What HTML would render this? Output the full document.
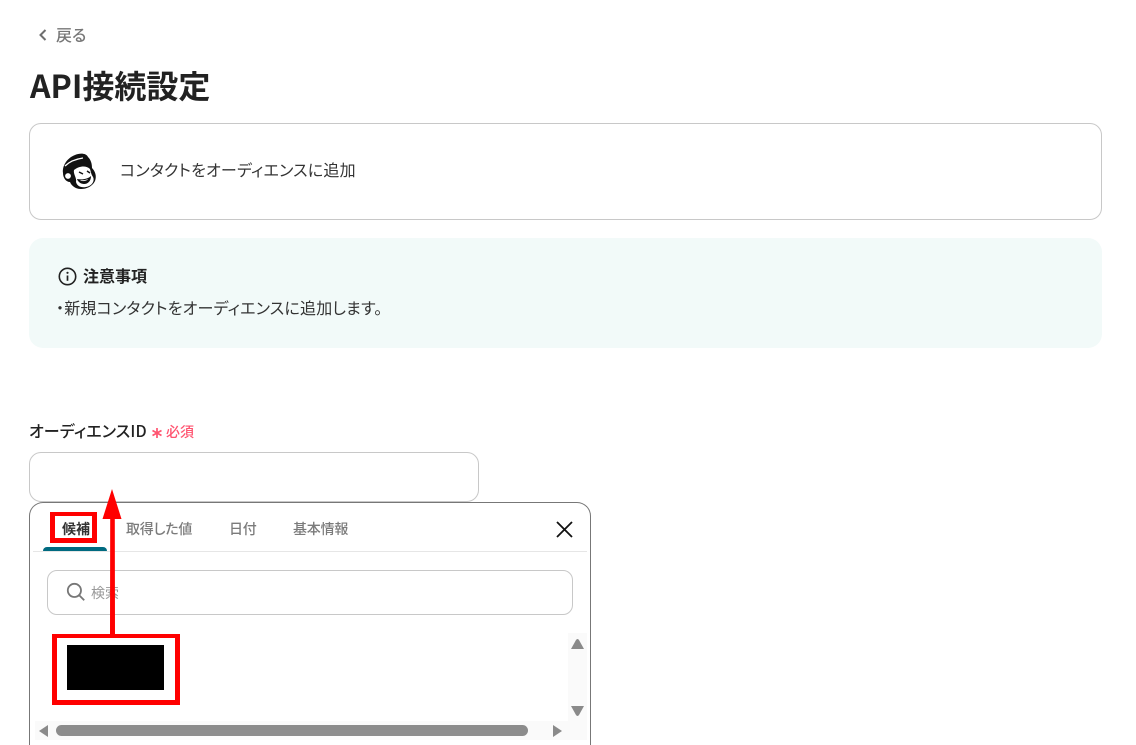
<!DOCTYPE html>
<html lang="ja">
<head>
<meta charset="utf-8">
<title>API接続設定</title>
<style>
html,body{margin:0;padding:0;background:#fff;width:1136px;height:745px;overflow:hidden}
body{position:relative;font-family:"Noto Sans CJK JP","Liberation Sans",sans-serif;color:#222;font-feature-settings:"palt"}
.a{position:absolute;white-space:nowrap;box-sizing:border-box}
</style>
</head>
<body>
<svg class="a" style="left:35px;top:27px" width="16" height="16" viewBox="0 0 16 16"><path d="M10.500 3 5.500 8l5 5" fill="none" stroke="#6f6f6f" stroke-width="2"/></svg>
<div class="a" style="left:56px;top:24px;font-size:16px;line-height:20px;font-weight:500;color:#777">戻る</div>
<div class="a" style="left:30px;top:65px;font-size:32px;line-height:40px;font-weight:700;color:#222">API接続設定</div>

<div class="a" style="left:29px;top:123px;width:1073px;height:97px;border:1px solid #c8c8c8;border-radius:12px"></div>
<svg class="a" style="left:61px;top:153px" width="37" height="37" viewBox="0 0 37 37">
<path d="M2 20C1 13 6 5 14 2c5-2 11-2 13 2 3 3 4 7 4 11 3 3 5 8 3 13-3 6-9 8-14 8-6 0-10-4-11-7-4 0-7-4-7-9Z" fill="#111"/>
<path d="M13 17c5-4 12-5 16-1 1 3 1 5 3 8 2 4-1 9-7 10-5 1-9-1-10-5 1-4-3-8-2-12Z" fill="#fff"/>
<path d="M18 19l4 2M26 18l3 2" stroke="#111" stroke-width="1.500" fill="none"/>
<path d="M16 26c5 1 11 0 14-3 0 5-3 8-7 8-3 0-6-2-7-5Z" fill="#111"/>
<path d="M19 27c3 .5 6 0 8-1-1 2-6 3-8 1Z" fill="#fff"/>
<circle cx="7" cy="23" r="3.400" fill="#fff" stroke="#111"/>
<path d="M4 13C9 8 15 6 22 5" stroke="#fff" stroke-width="1.300" fill="none"/>
</svg>
<div class="a" style="left:120px;top:158px;font-size:16px;line-height:22px;letter-spacing:.2px;color:#333">コンタクトをオーディエンスに追加</div>

<div class="a" style="left:29px;top:238px;width:1073px;height:110px;background:#f2faf9;border-radius:14px"></div>
<svg class="a" style="left:58px;top:267px" width="19" height="19" viewBox="0 0 19 19"><circle cx="9.500" cy="9.500" r="8.200" fill="none" stroke="#222" stroke-width="1.600"/><circle cx="9.500" cy="5.800" r="1.100" fill="#222"/><path d="M9.500 8.500v5.300" stroke="#222" stroke-width="1.700"/></svg>
<div class="a" style="left:83px;top:265px;font-size:16px;line-height:21px;font-weight:700;color:#222">注意事項</div>
<div class="a" style="left:56px;top:297px;font-size:16px;line-height:21px;letter-spacing:.2px;color:#333">・新規コンタクトをオーディエンスに追加します。</div>

<div class="a" style="left:29px;top:420px;font-size:16px;line-height:21px;letter-spacing:.15px;font-weight:500;color:#222">オーディエンスID</div>
<svg class="a" style="left:151px;top:427px" width="12" height="12" viewBox="0 0 12 12"><path d="M6 1v10M1.500 3.500l9 5M10.500 3.500l-9 5" stroke="#ff5470" stroke-width="1.700" fill="none"/></svg>
<div class="a" style="left:166px;top:423px;font-size:14px;line-height:18px;font-weight:500;color:#ff5470">必須</div>
<div class="a" style="left:29px;top:452px;width:450px;height:50px;border:1px solid #c8c8c8;border-radius:12px"></div>

<div class="a" style="left:29px;top:502px;width:562px;height:243px;background:#fff;border:1px solid #777;border-bottom:none;border-radius:14px 14px 0 0"></div>
<div class="a" style="left:33px;top:551px;width:554px;height:1px;background:#e6e6e6"></div>
<div class="a" style="left:43px;top:547px;width:64px;height:4px;background:#006a80;border-radius:4px 4px 0 0"></div>
<div class="a" style="left:62px;top:520px;font-size:14px;line-height:18px;font-weight:700;color:#333">候補</div>
<div class="a" style="left:126px;top:520px;font-size:14px;line-height:18px;letter-spacing:-.2px;font-weight:500;color:#7b7b7b">取得した値</div>
<div class="a" style="left:229px;top:520px;font-size:14px;line-height:18px;letter-spacing:-.2px;font-weight:500;color:#7b7b7b">日付</div>
<div class="a" style="left:293px;top:520px;font-size:14px;line-height:18px;letter-spacing:-.2px;font-weight:500;color:#7b7b7b">基本情報</div>
<svg class="a" style="left:554px;top:519px" width="21" height="21" viewBox="0 0 21 21"><path d="M3 3l15 15M18 3 3 18" stroke="#111" stroke-width="1.800" fill="none"/></svg>

<div class="a" style="left:47px;top:570px;width:526px;height:45px;border:1px solid #c8c8c8;border-radius:10px"></div>
<svg class="a" style="left:66px;top:582px" width="20" height="20" viewBox="0 0 20 20"><circle cx="8.400" cy="8.400" r="6.600" fill="none" stroke="#777" stroke-width="1.800"/><path d="M13.200 13.200l5 5" stroke="#777" stroke-width="1.800"/></svg>
<div class="a" style="left:91px;top:584px;font-size:14px;line-height:18px;color:#999">検索</div>

<div class="a" style="left:568px;top:633px;width:19px;height:88px;background:#fafafa"></div>
<div class="a" style="left:35px;top:721px;width:552px;height:19px;background:#fafafa"></div>
<svg class="a" style="left:570px;top:638px" width="15" height="12" viewBox="0 0 15 12"><path d="M6 2q1.500-2 3 0l5 9H1Z" fill="#8a8a8a"/></svg>
<svg class="a" style="left:570px;top:705px" width="15" height="12" viewBox="0 0 15 12"><path d="M1 1h13l-5 9q-1.500 2-3 0Z" fill="#8a8a8a"/></svg>
<svg class="a" style="left:38px;top:724px" width="11" height="14" viewBox="0 0 11 14"><path d="M10 1v12L1 7Z" fill="#8a8a8a"/></svg>
<svg class="a" style="left:552px;top:724px" width="11" height="14" viewBox="0 0 11 14"><path d="M1 1v12l9-6Z" fill="#8a8a8a"/></svg>
<div class="a" style="left:56px;top:725px;width:472px;height:11px;background:#8c8c8c;border-radius:6px"></div>

<div class="a" style="left:50px;top:512px;width:47px;height:31px;border:5px solid #f00;border-top-width:4px"></div>
<div class="a" style="left:52px;top:634px;width:128px;height:71px;border:5px solid #f00;border-top-width:4px"></div>
<div class="a" style="left:67px;top:645px;width:97px;height:45px;background:#000"></div>
<svg class="a" style="left:100px;top:488px" width="24" height="147" viewBox="0 0 24 147"><path d="M12 1 21.500 31H14.800L15 146H10L10.200 31H2.500Z" fill="#f00"/></svg>
</body>
</html>
